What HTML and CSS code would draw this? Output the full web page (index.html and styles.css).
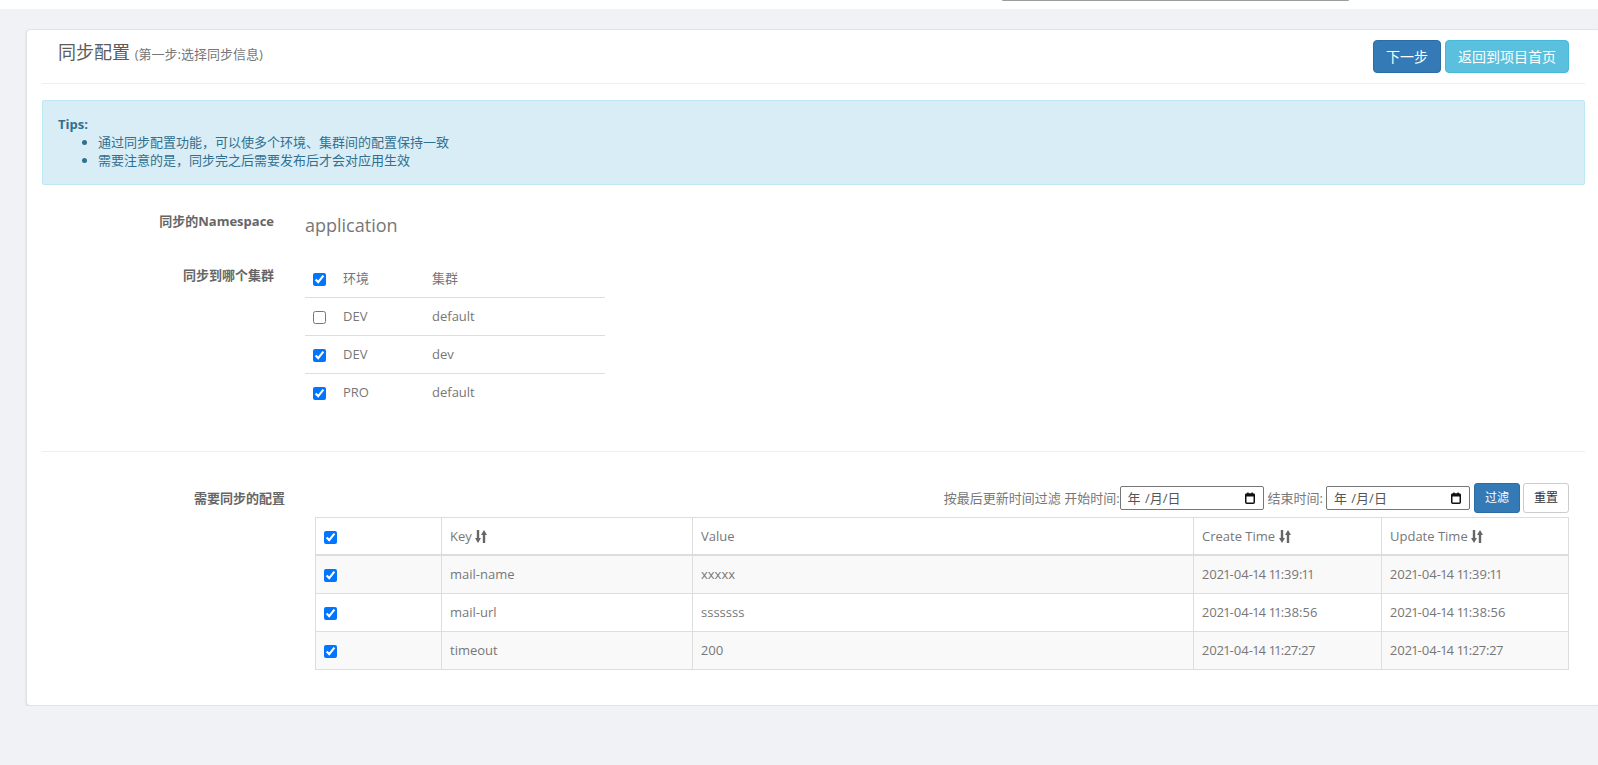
FILE: index.html
```html
<!DOCTYPE html>
<html lang="zh-CN">
<head>
<meta charset="utf-8">
<title>同步配置</title>
<link rel="stylesheet" href="styles.css">
</head>
<body>
<div class="topbar"><div class="scroll-thumb"></div></div>
<div class="card">
  <div class="card-header">
    <div class="title">同步配置 <small>(第一步:选择同步信息)</small></div>
    <div class="actions">
      <button class="btn btn-primary">下一步</button>
      <button class="btn btn-info">返回到项目首页</button>
    </div>
  </div>

  <div class="alert">
    <strong>Tips:</strong>
    <ul>
      <li>通过同步配置功能，可以使多个环境、集群间的配置保持一致</li>
      <li>需要注意的是，同步完之后需要发布后才会对应用生效</li>
    </ul>
  </div>

  <div class="form-row ns-row">
    <label class="control-label">同步的Namespace</label>
    <div class="ns-name">application</div>
  </div>

  <div class="form-row cluster-row">
    <label class="control-label">同步到哪个集群</label>
    <div>
      <table class="cluster-table">
        <tr><td class="c-check"><input type="checkbox" checked></td><td class="c-env">环境</td><td>集群</td></tr>
        <tr><td class="c-check"><input type="checkbox"></td><td class="c-env">DEV</td><td>default</td></tr>
        <tr><td class="c-check"><input type="checkbox" checked></td><td class="c-env">DEV</td><td>dev</td></tr>
        <tr><td class="c-check"><input type="checkbox" checked></td><td class="c-env">PRO</td><td>default</td></tr>
      </table>
    </div>
  </div>

  <hr class="sep">

  <div class="form-row config-row">
    <label class="control-label">需要同步的配置</label>
    <div class="config-body">
      <div class="filter">
        <span class="filter-text">按最后更新时间过滤 开始时间:</span>
        <div class="date-input"><span>年 /月/日</span><svg class="cal" width="10" height="12" viewBox="0 0 10 12"><rect x="0.75" y="2" width="8.5" height="9.25" rx="1" fill="none" stroke="#111" stroke-width="1.5"/><rect x="0.5" y="2" width="9" height="2.5" fill="#111"/><rect x="2.2" y="0.5" width="1.4" height="2" fill="#111"/><rect x="6.4" y="0.5" width="1.4" height="2" fill="#111"/></svg></div>
        <span class="filter-text end-label">结束时间:</span>
        <div class="date-input"><span>年 /月/日</span><svg class="cal" width="10" height="12" viewBox="0 0 10 12"><rect x="0.75" y="2" width="8.5" height="9.25" rx="1" fill="none" stroke="#111" stroke-width="1.5"/><rect x="0.5" y="2" width="9" height="2.5" fill="#111"/><rect x="2.2" y="0.5" width="1.4" height="2" fill="#111"/><rect x="6.4" y="0.5" width="1.4" height="2" fill="#111"/></svg></div>
        <button class="btn btn-sm btn-primary filter-btn">过滤</button>
        <button class="btn btn-sm btn-default">重置</button>
      </div>
      <table class="config-table">
        <thead>
          <tr>
            <th class="col-check"><input type="checkbox" checked></th>
            <th class="col-key">Key <svg class="sort" width="12" height="15" viewBox="0 0 12 15"><path d="M3 1v9" stroke="#666" stroke-width="2.4"/><path d="M0 9h6l-3 5z" fill="#666"/><path d="M9 14V5" stroke="#666" stroke-width="2.4"/><path d="M6 6h6L9 1z" fill="#666"/></svg></th>
            <th class="col-value">Value</th>
            <th class="col-time">Create Time <svg class="sort" width="12" height="15" viewBox="0 0 12 15"><path d="M3 1v9" stroke="#666" stroke-width="2.4"/><path d="M0 9h6l-3 5z" fill="#666"/><path d="M9 14V5" stroke="#666" stroke-width="2.4"/><path d="M6 6h6L9 1z" fill="#666"/></svg></th>
            <th>Update Time <svg class="sort" width="12" height="15" viewBox="0 0 12 15"><path d="M3 1v9" stroke="#666" stroke-width="2.4"/><path d="M0 9h6l-3 5z" fill="#666"/><path d="M9 14V5" stroke="#666" stroke-width="2.4"/><path d="M6 6h6L9 1z" fill="#666"/></svg></th>
          </tr>
        </thead>
        <tbody>
          <tr>
            <td><input type="checkbox" checked></td>
            <td>mail-name</td>
            <td>xxxxx</td>
            <td class="num">2021-04-14 11:39:11</td>
            <td class="num">2021-04-14 11:39:11</td>
          </tr>
          <tr>
            <td><input type="checkbox" checked></td>
            <td>mail-url</td>
            <td>sssssss</td>
            <td class="num">2021-04-14 11:38:56</td>
            <td class="num">2021-04-14 11:38:56</td>
          </tr>
          <tr>
            <td><input type="checkbox" checked></td>
            <td>timeout</td>
            <td class="num">200</td>
            <td class="num">2021-04-14 11:27:27</td>
            <td class="num">2021-04-14 11:27:27</td>
          </tr>
        </tbody>
      </table>
    </div>
  </div>
</div>
</body>
</html>
```

FILE: styles.css
```css
html, body {
  overflow: hidden;
}

body {
  margin: 0;
  background: #f0f2f6;
  font-family: "Open Sans", "Noto Sans CJK SC", sans-serif;
  font-size: 13px;
  line-height: 18px;
  color: #777;
}

.topbar {
  height: 9px;
  background: #fff;
}

.scroll-thumb {
  margin-left: 1002px;
  width: 347px;
  height: 1px;
  background: #9c9c9c;
  border-radius: 0 0 2px 2px;
}

.card {
  margin: 20px 0 0 26px;
  width: 1575px;
  box-sizing: border-box;
  background: #fff;
  border: 1px solid #dfe2e7;
  border-radius: 4px;
  box-shadow: 0 1px 2px rgba(0, 0, 0, 0.12);
  padding: 0 15px 35px;
}

.card-header {
  display: flex;
  justify-content: space-between;
  align-items: flex-start;
  padding: 10px 16px 10px;
  border-bottom: 1px solid #eceef2;
}

.title {
  font-size: 18px;
  line-height: 26px;
  color: #5c5c5c;
  margin-top: -1px;
}

.title small {
  font-size: 13px;
  color: #777;
}

.actions {
  display: flex;
  gap: 4px;
}

.btn {
  font-family: "Open Sans", "Noto Sans CJK SC", sans-serif;
  font-size: 14px;
  line-height: 19px;
  padding: 6px 12px;
  border: 1px solid transparent;
  border-radius: 4px;
  color: #fff;
  cursor: pointer;
}

.btn-primary {
  background: #337ab7;
  border-color: #2e6da4;
}

.btn-info {
  background: #5bc0de;
  border-color: #46b8da;
}

.btn-sm {
  font-size: 12px;
  line-height: 18px;
  padding: 5px 10px;
  border-radius: 3px;
}

.btn-default {
  background: #fff;
  border-color: #ccc;
  color: #333;
}

.alert {
  margin-top: 16px;
  padding: 14px 15px 15px;
  background: #d9edf7;
  border: 1px solid #bce8f1;
  border-radius: 2px;
  color: #31708f;
}

.alert strong {
  display: block;
}

.alert ul {
  margin: 0;
  padding-left: 40px;
}

.form-row {
  display: grid;
  grid-template-columns: 232px 1fr;
  column-gap: 31px;
}

.control-label {
  text-align: right;
  font-weight: bold;
  color: #666;
  padding-top: 7px;
  line-height: 19px;
}

.ns-row {
  margin-top: 20px;
  height: 54px;
}

.ns-name {
  font-size: 18px;
  line-height: 26px;
  padding-top: 7px;
  color: #777;
}

.cluster-table {
  border-collapse: collapse;
  width: 300px;
}

.cluster-table td {
  padding: 8px;
  line-height: 21px;
  border-top: 1px solid #ddd;
  vertical-align: middle;
}

.cluster-table tr:first-child td {
  border-top: none;
  padding-top: 9px;
}

.cluster-table .c-check {
  width: 14px;
}

.cluster-table .c-env {
  width: 73px;
}

input[type="checkbox"] {
  margin: 0;
  width: 13px;
  height: 13px;
  vertical-align: middle;
}

.sep {
  margin: 40px 0 0;
  border: 0;
  border-top: 1px solid #eceef2;
}

.config-row {
  margin-top: 30px;
  grid-template-columns: 243px 1fr;
  column-gap: 30px;
  padding-right: 16px;
}

.filter {
  display: flex;
  justify-content: flex-end;
  align-items: center;
  height: 31px;
  margin-bottom: 4px;
}

.filter-text {
  color: #777;
}

.end-label {
  margin: 0 3px 0 4px;
}

.date-input {
  width: 144px;
  height: 24px;
  box-sizing: border-box;
  border: 1px solid #767676;
  border-radius: 2px;
  display: flex;
  align-items: center;
  justify-content: space-between;
  padding: 0 8px 0 7px;
  color: #555;
  font-size: 13px;
  word-spacing: 1px;
}

.filter-btn {
  margin-left: 4px;
  margin-right: 3px;
}

.config-table {
  width: 100%;
  border-collapse: collapse;
  table-layout: fixed;
  border: 1px solid #ddd;
}

.config-table th,
.config-table td {
  border: 1px solid #ddd;
  padding: 8px;
  text-align: left;
  vertical-align: middle;
  white-space: nowrap;
}

.config-table th {
  font-weight: normal;
  line-height: 20px;
  border-bottom-width: 2px;
}

.config-table td {
  line-height: 21px;
}

.config-table .num {
  font-variant-numeric: proportional-nums;
}

.config-table tbody tr:nth-child(odd) td {
  background: #f9f9f9;
}

.col-check { width: 109px; }
.col-key { width: 234px; }
.col-value { width: 484px; }
.col-time { width: 171px; }

.sort {
  vertical-align: -3px;
}
```
